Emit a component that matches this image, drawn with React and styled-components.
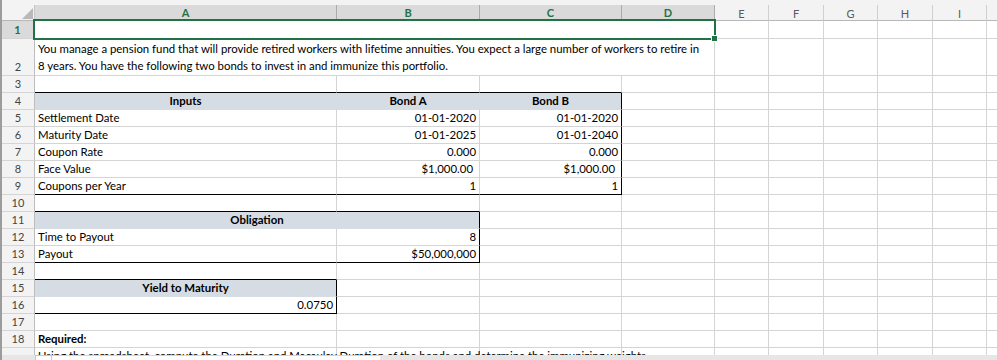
import React from "react";
import styled, { createGlobalStyle } from "styled-components";

const GlobalStyle = createGlobalStyle`
  html, body {
    margin: 0;
    padding: 0;
    background: #fff;
    overflow: hidden;
  }
  body {
    font-family: Lato, "Liberation Sans", sans-serif;
  }
`;

const COL_W = [33, 302, 143, 142, 93, 54, 55, 54, 55, 54, 60];
const LETTERS = ["A", "B", "C", "D", "E", "F", "G", "H", "I", ""];
const FILL = "#d6dce4";
const GRID = "#d4d4d4";
const GREEN = "#217346";

const blank = (n) => Array.from({ length: n }, () => ({}));

const rows = [
  { n: 1, sel: true, cells: [{ span: 4, selected: true }, ...blank(6)] },
  {
    n: 2,
    cells: [
      {
        span: 4,
        lines: [
          "You manage a pension fund that will provide retired workers with lifetime annuities. You expect a large number of workers to retire in",
          "8 years. You have the following two bonds to invest in and immunize this portfolio.",
        ],
      },
      ...blank(6),
    ],
  },
  { n: 3, cells: [{ b: 1 }, { b: 1 }, { b: 1 }, ...blank(7)] },
  {
    n: 4,
    cells: [
      { text: "Inputs", align: "center", bold: 1, fill: 1 },
      { text: "Bond A", align: "center", bold: 1, fill: 1 },
      { text: "Bond B", align: "center", bold: 1, fill: 1, r: 1 },
      ...blank(7),
    ],
  },
  {
    n: 5,
    cells: [
      { text: "Settlement Date" },
      { text: "01-01-2020", align: "right" },
      { text: "01-01-2020", align: "right", r: 1 },
      ...blank(7),
    ],
  },
  {
    n: 6,
    cells: [
      { text: "Maturity Date" },
      { text: "01-01-2025", align: "right" },
      { text: "01-01-2040", align: "right", r: 1 },
      ...blank(7),
    ],
  },
  {
    n: 7,
    cells: [
      { text: "Coupon Rate" },
      { text: "0.000", align: "right" },
      { text: "0.000", align: "right", r: 1 },
      ...blank(7),
    ],
  },
  {
    n: 8,
    cells: [
      { text: "Face Value" },
      { text: "$1,000.00", align: "right", pad: 1 },
      { text: "$1,000.00", align: "right", pad: 1, r: 1 },
      ...blank(7),
    ],
  },
  {
    n: 9,
    cells: [
      { text: "Coupons per Year", b: 1 },
      { text: "1", align: "right", b: 1 },
      { text: "1", align: "right", b: 1, r: 1 },
      ...blank(7),
    ],
  },
  { n: 10, cells: [{ b: 1 }, { b: 1 }, ...blank(8)] },
  {
    n: 11,
    cells: [
      { span: 2, text: "Obligation", align: "center", bold: 1, fill: 1, r: 1 },
      ...blank(8),
    ],
  },
  {
    n: 12,
    cells: [
      { text: "Time to Payout" },
      { text: "8", align: "right", r: 1 },
      ...blank(8),
    ],
  },
  {
    n: 13,
    cells: [
      { text: "Payout", b: 1 },
      { text: "$50,000,000", align: "right", r: 1, b: 1 },
      ...blank(8),
    ],
  },
  { n: 14, cells: [{ b: 1 }, ...blank(9)] },
  {
    n: 15,
    cells: [
      { text: "Yield to Maturity", align: "center", bold: 1, fill: 1, r: 1 },
      ...blank(9),
    ],
  },
  {
    n: 16,
    cells: [{ text: "0.0750", align: "right", r: 1, b: 1 }, ...blank(9)],
  },
  { n: 17, cells: blank(10) },
  { n: 18, cells: [{ text: "Required:", bold: 1 }, ...blank(9)] },
  {
    n: 19,
    cells: [
      {
        text: "Using the spreadsheet, compute the Duration and Macaulay Duration of the bonds and determine the immunizing weights.",
      },
      ...blank(9),
    ],
  },
];

function App() {
  return (
    <>
      <GlobalStyle />
      <Window>
        <LeftRail />
        <Main>
          <TopStrip />
          <Sheet>
            <Grid>
              <Corner>
                <svg width="33" height="16" viewBox="0 0 33 16">
                  <polygon points="20,14 31,3 31,14" fill="#b9b9b9" />
                </svg>
              </Corner>
              {LETTERS.map((c, i) => (
                <ColHead key={i} $sel={i < 4}>
                  {c}
                </ColHead>
              ))}
              {rows.map((row) => (
                <React.Fragment key={row.n}>
                  <RowHead $sel={row.sel}>{row.n < 19 ? row.n : ""}</RowHead>
                  {row.cells.map((c, i) => (
                    <Cell
                      key={i}
                      $span={c.span}
                      $align={c.align}
                      $bold={c.bold}
                      $fill={c.fill}
                      $r={c.r}
                      $b={c.b}
                      $pad={c.pad}
                      $selected={c.selected}
                    >
                      {c.selected && (
                        <Selection>
                          <Handle />
                        </Selection>
                      )}
                      {c.lines && (
                        <Lines>
                          {c.lines.map((l) => (
                            <span key={l}>{l}</span>
                          ))}
                        </Lines>
                      )}
                      {c.text && <Text>{c.text}</Text>}
                    </Cell>
                  ))}
                </React.Fragment>
              ))}
            </Grid>
          </Sheet>
          <BottomBar>
            <BarLeft />
            <TabButton />
            <TabArea />
            <Scroll />
          </BottomBar>
        </Main>
      </Window>
    </>
  );
}

const Window = styled.div`
  display: flex;
  width: 997px;
  height: 360px;
  overflow: hidden;
`;
const LeftRail = styled.div`
  width: 2px;
  flex: none;
  background: #9c9c9c;
`;
const Main = styled.div`
  flex: 1;
  display: flex;
  flex-direction: column;
  overflow: hidden;
`;
const TopStrip = styled.div`
  height: 5px;
  flex: none;
  background: #f3f3f3;
`;
const Sheet = styled.div`
  height: 350px;
  flex: none;
  overflow: hidden;
`;
const Grid = styled.div`
  display: grid;
  grid-template-columns: ${COL_W.map((w) => w + "px").join(" ")};
  grid-template-rows: 16px 18px 37px repeat(17, 17px);
  font-size: 11.4px;
`;
const Corner = styled.div`
  box-sizing: border-box;
  background: #f3f3f3;
  border-right: 1px solid #c6c6c6;
  border-bottom: 1px solid #b8b8b8;
  svg {
    display: block;
  }
`;
const ColHead = styled.div`
  box-sizing: border-box;
  display: flex;
  align-items: center;
  justify-content: center;
  font-size: 11px;
  background: ${(p) => (p.$sel ? "#dadada" : "#f3f3f3")};
  color: ${(p) => (p.$sel ? GREEN : "#5a5a5a")};
  font-weight: ${(p) => (p.$sel ? 700 : 400)};
  border-right: 1px solid ${(p) => (p.$sel ? "#ababab" : "#d0d0d0")};
  border-bottom: ${(p) => (p.$sel ? `2px solid ${GREEN}` : "1px solid #b8b8b8")};
  padding-top: 1px;
`;
const RowHead = styled.div`
  box-sizing: border-box;
  display: flex;
  align-items: flex-end;
  justify-content: center;
  padding-bottom: 1px;
  line-height: 15px;
  font-size: 11px;
  background: ${(p) => (p.$sel ? "#dadada" : "#f3f3f3")};
  color: ${(p) => (p.$sel ? GREEN : "#444")};
  font-weight: ${(p) => (p.$sel ? 700 : 400)};
  border-right: ${(p) => (p.$sel ? `2px solid ${GREEN}` : "1px solid #bdbdbd")};
  border-bottom: 1px solid #d4d4d4;
`;
const Cell = styled.div`
  box-sizing: border-box;
  position: ${(p) => (p.$selected ? "relative" : "static")};
  grid-column: span ${(p) => p.$span || 1};
  display: flex;
  align-items: flex-end;
  justify-content: ${(p) =>
    p.$align === "right" ? "flex-end" : p.$align === "center" ? "center" : "flex-start"};
  padding: 0 ${(p) => (p.$pad ? "6px" : "3px")} 1px 3px;
  line-height: 15px;
  white-space: nowrap;
  color: #000;
  font-weight: ${(p) => (p.$bold ? 700 : 400)};
  background: ${(p) => (p.$fill ? FILL : "#fff")};
  border-right: 1px solid
    ${(p) => (p.$r ? "#000" : p.$fill ? FILL : GRID)};
  border-bottom: 1px solid ${(p) => (p.$b ? "#000" : p.$fill ? FILL : GRID)};
`;
const Text = styled.span`
  position: relative;
  z-index: 1;
`;
const Lines = styled.div`
  display: flex;
  flex-direction: column;
  line-height: 17px;
`;
const Selection = styled.div`
  position: absolute;
  top: -2px;
  left: -2px;
  right: -2px;
  bottom: -2px;
  border: 2px solid ${GREEN};
  z-index: 2;
`;
const Handle = styled.div`
  position: absolute;
  right: -4px;
  bottom: -4px;
  width: 5px;
  height: 5px;
  background: ${GREEN};
  border: 1px solid #fff;
`;
const BottomBar = styled.div`
  height: 5px;
  flex: none;
  display: flex;
`;
const BarLeft = styled.div`
  width: 33px;
  background: #e6e6e6;
  border-right: 1px solid #c6c6c6;
`;
const TabButton = styled.div`
  width: 15px;
  background: #fff;
  border-right: 1px solid #c6c6c6;
  border-top: 1px solid #c6c6c6;
`;
const TabArea = styled.div`
  width: 328px;
  background: #fff;
  border-top: 1px solid #d4d4d4;
`;
const Scroll = styled.div`
  flex: 1;
  background: #e6e6e6;
`;

export default App;
